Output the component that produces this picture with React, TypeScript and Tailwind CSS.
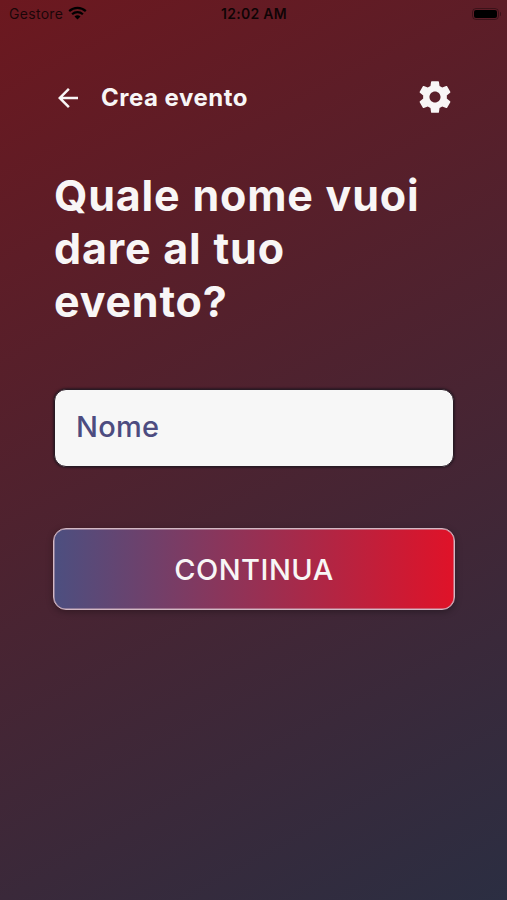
import { MdArrowBack } from "react-icons/md";

function WifiIcon() {
  return (
    <svg width="19" height="14" viewBox="0 0 19 14" fill="none" stroke="currentColor" strokeWidth="2.2">
      <path d="M1.2 5.1C5.9 .7 13.1 .7 17.8 5.1" />
      <path d="M4.1 8.3C7.2 5.4 11.8 5.4 14.9 8.3" />
      <path d="M9.5 13.4L6.5 10.4C8.2 8.9 10.8 8.9 12.5 10.4Z" fill="currentColor" stroke="none" />
    </svg>
  );
}

function GearIcon() {
  return (
    <svg width="38" height="38" viewBox="0 0 24 24" fill="currentColor">
      <path d="M19.43 12.98c.04-.32.07-.64.07-.98s-.03-.66-.07-.98l2.11-1.65c.19-.15.24-.42.12-.64l-2-3.46c-.12-.22-.39-.3-.61-.22l-2.49 1c-.52-.4-1.08-.73-1.69-.98l-.38-2.65C14.46 2.18 14.25 2 14 2h-4c-.25 0-.46.18-.49.42l-.38 2.65c-.61.25-1.17.59-1.69.98l-2.49-1c-.23-.09-.49 0-.61.22l-2 3.46c-.13.22-.07.49.12.64l2.11 1.65c-.04.32-.07.65-.07.98s.03.66.07.98l-2.11 1.65c-.19.15-.24.42-.12.64l2 3.46c.12.22.39.3.61.22l2.49-1c.52.4 1.08.73 1.69.98l.38 2.65c.03.24.24.42.49.42h4c.25 0 .46-.18.49-.42l.38-2.65c.61-.25 1.17-.59 1.69-.98l2.49 1c.23.09.49 0 .61-.22l2-3.46c.12-.22.07-.49-.12-.64l-2.11-1.65zM12 15.5c-1.93 0-3.5-1.57-3.5-3.5s1.57-3.5 3.5-3.5 3.5 1.57 3.5 3.5-1.57 3.5-3.5 3.5z" />
    </svg>
  );
}

function Battery() {
  return (
    <div className="flex items-center gap-px">
      <div className="h-3 w-[27px] rounded-[4px] border border-black/35 p-px">
        <div className="h-full rounded-[2px] bg-black" />
      </div>
      <div className="h-1 w-[1.5px] rounded-r bg-black/35" />
    </div>
  );
}

function StatusBar() {
  return (
    <div className="grid h-[27px] grid-cols-3 items-center pl-[9px] pr-1.5 text-black">
      <div className="flex items-center gap-[5px] text-[14px] tracking-[0.3px] text-black/75">
        <span>Gestore</span>
        <span className="-mt-0.5 text-black">
          <WifiIcon />
        </span>
      </div>
      <span className="-ml-0.5 text-center text-[14px] font-semibold tracking-[0.3px] text-black/85">12:02 AM</span>
      <div className="flex justify-end">
        <Battery />
      </div>
    </div>
  );
}

export default function App() {
  return (
    <div className="h-[900px] w-[507px] overflow-hidden bg-[linear-gradient(152deg,#6c181f_0%,#2b2e42_100%)] font-['Inter',sans-serif] text-[#f8f6f6]">
      <StatusBar />
      <div className="pl-[53px] pr-[52px] pt-[52px]">
        <header className="flex h-9 items-center">
          <button className="flex w-12 pt-px" aria-label="Indietro">
            <MdArrowBack size={30} />
          </button>
          <span className="pt-px text-[24px] font-bold tracking-[0.5px]">Crea evento</span>
          <button className="ml-auto mr-px" aria-label="Impostazioni">
            <GearIcon />
          </button>
        </header>
        <h1 className="ml-px mt-[54px] text-[43px] font-bold leading-[53px] tracking-[0.8px] [word-spacing:1px]">
          Quale nome vuoi
          <br />
          dare al tuo
          <br />
          evento?
        </h1>
        <div className="mt-[61px] px-px">
          <input
            className="block h-[78px] w-full rounded-[12px] border border-[#291a24] bg-[#f7f7f7] px-[21px] pb-1 text-[29px] font-medium tracking-[0.3px] text-[#4d4c80] shadow-[0_0_2px_1px_rgba(32,20,30,0.7)] outline-none placeholder:text-[#4d4c80]"
            placeholder="Nome"
          />
        </div>
        <button className="mt-[61px] block h-[82px] w-full rounded-[13px] border border-[#d3b8c4] bg-linear-to-r/srgb from-[#4c4f80] to-[#e01228] bg-origin-border pt-0.5 text-[29px] font-medium tracking-[0.5px] shadow-[0_2px_7px_rgba(0,0,0,0.3),inset_0_0_0_0.5px_#c8a9b8]">
          CONTINUA
        </button>
      </div>
    </div>
  );
}
